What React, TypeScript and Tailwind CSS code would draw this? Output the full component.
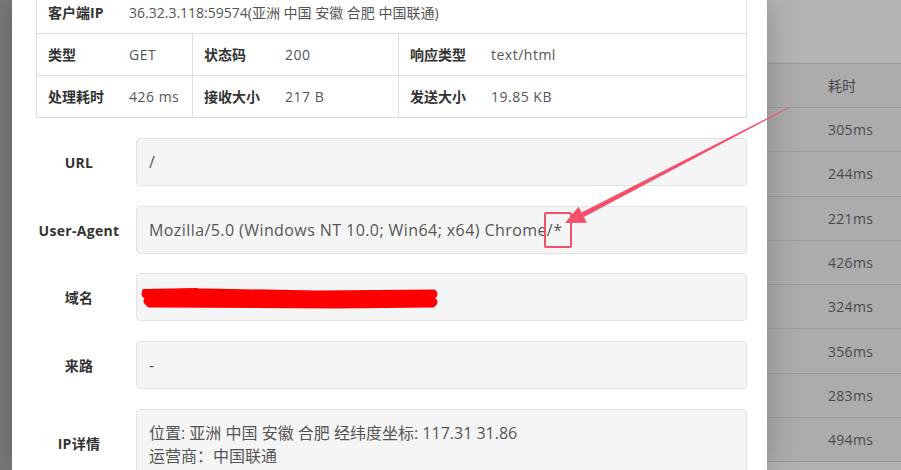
const font = "font-['Open_Sans','Noto_Sans_CJK_SC',sans-serif]";

const times = ["305ms", "244ms", "221ms", "426ms", "324ms", "356ms", "283ms", "494ms"];

function Cell({ label, value, className = "", wide = false }: { label: string; value: string; className?: string; wide?: boolean }) {
  return (
    <div className={`flex items-center px-[11px] ${className}`}>
      <span className="w-[81px] shrink-0 font-bold text-[#333]">{label}</span>
      <span className={`text-[#555] ${wide ? "" : "tracking-[0.5px]"}`}>{value}</span>
    </div>
  );
}

function Field({ label, children, className = "", box = "" }: { label: string; children: React.ReactNode; className?: string; box?: string }) {
  return (
    <div className={`flex items-center ${className}`}>
      <div className="w-[86px] shrink-0 text-center text-[14px] font-bold tracking-[0.3px] text-[#333]">{label}</div>
      <div
        className={`relative ml-[14px] flex h-[48px] flex-1 items-center rounded-[4px] border border-[#e3e3e3] bg-[#f5f5f5] pl-[12px] text-[16px] text-[#555] ${box}`}
      >
        {children}
      </div>
    </div>
  );
}

export default function App() {
  return (
    <div className={`relative flex h-[470px] w-[901px] overflow-hidden bg-[#7a7a7a] ${font}`}>
      <div className="w-[12px] shrink-0 bg-[#7a7a7a]" />

      {/* modal */}
      <div className="relative z-10 w-[755px] shrink-0 bg-white pl-[24px] pr-[20px] shadow-[0_0_28px_rgba(0,0,0,0.22)]">
        <div className="-mt-[8px] border-x border-b border-[#ddd] text-[14px]">
          <Cell label="客户端IP" value="36.32.3.118:59574(亚洲 中国 安徽 合肥 中国联通)" wide className="h-[42px] border-b border-[#ddd]" />
          <div className="grid h-[42px] grid-cols-[156px_206px_1fr] border-b border-[#ddd]">
            <Cell label="类型" value="GET" className="border-r border-[#ddd]" />
            <Cell label="状态码" value="200" className="border-r border-[#ddd]" />
            <Cell label="响应类型" value="text/html" />
          </div>
          <div className="grid h-[41px] grid-cols-[156px_206px_1fr]">
            <Cell label="处理耗时" value="426 ms" className="border-r border-[#ddd]" />
            <Cell label="接收大小" value="217 B" className="border-r border-[#ddd]" />
            <Cell label="发送大小" value="19.85 KB" />
          </div>
        </div>

        <Field label="URL" className="mt-[20px]">/</Field>
        <Field label="User-Agent" className="mt-[20px]">
          <span className="tracking-[0.42px]">Mozilla/5.0 (Windows NT 10.0; Win64; x64) Chrome/*</span>
        </Field>
        <Field label="域名" className="mt-[19px]">
          <svg className="absolute left-0 top-0" width="320" height="48" viewBox="0 0 320 48">
            <g stroke="#ff0000" strokeLinecap="round" fill="none">
              <path d="M9 20 L70 19 L180 21 L296 20" strokeWidth="9" />
              <path d="M11 27 L120 28 L250 27 L296 28" strokeWidth="9" />
              <path d="M7 17 L60 16" strokeWidth="4" />
              <path d="M12 31 L200 32 L296 31" strokeWidth="5" />
            </g>
          </svg>
        </Field>
        <Field label="来路" className="mt-[20px]">-</Field>
        <Field label="IP详情" className="mt-[20px]" box="h-[68px] items-start pt-[12px] leading-[23px]">
          <div>
            <div>位置: 亚洲 中国 安徽 合肥 经纬度坐标: 117.31 31.86</div>
            <div>运营商：中国联通</div>
          </div>
        </Field>
      </div>

      {/* dimmed table behind */}
      <div className="flex-1 bg-[#b1b1b1] text-[14px] text-[#4a4a4a]">
        <div className="h-[64px] border-b border-[#9a9a9a] bg-[#b3b3b3]" />
        <div className="flex h-[44px] items-center border-b border-[#9a9a9a] bg-[#acacac] pl-[61px]">耗时</div>
        {times.map((t) => (
          <div key={t} className="flex h-[44.3px] items-center border-b border-[#9a9a9a] bg-[#acacac] pl-[61px] tracking-[0.3px]">
            {t}
          </div>
        ))}
      </div>

      {/* annotation: arrow + box */}
      <div className="pointer-events-none absolute left-[544px] top-[212px] z-20 h-[36px] w-[28px] rounded-[2px] border-2 border-[#f5506a]" />
      <svg className="pointer-events-none absolute left-0 top-0 z-20" width="901" height="470" viewBox="0 0 901 470">
        <polygon points="789.7,106.7 790.3,107.3 583.9,217 581.5,212.6" fill="#f5506a" />
        <polygon points="565,223 578.6,206.8 586.9,222.8" fill="#f5506a" />
      </svg>
    </div>
  );
}
